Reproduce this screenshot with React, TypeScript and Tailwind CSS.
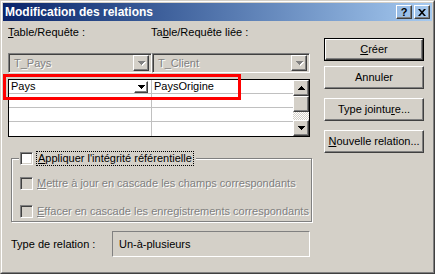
const raised =
  "border border-t-white border-l-white border-r-[#404040] border-b-[#404040] shadow-[inset_-1px_-1px_0_#808080]";
const sunken =
  "border border-t-[#808080] border-l-[#808080] border-r-white border-b-white shadow-[inset_1px_1px_0_#404040,inset_-1px_-1px_0_#d4d0c8]";
const disabledText = "text-[#808080] [text-shadow:1px_1px_0_#fff] whitespace-nowrap";

function DownTri({ grey = false }: { grey?: boolean }) {
  return (
    <svg width="7" height="4" viewBox="0 0 7 4" className={grey ? "drop-shadow-[1px_1px_0_#fff]" : ""}>
      <path d="M0 0h7v1h-1v1h-1v1h-1v1h-1v-1h-1v-1h-1v-1h-1z" fill={grey ? "#808080" : "#000"} />
    </svg>
  );
}

function UpTri() {
  return (
    <svg width="7" height="4" viewBox="0 0 7 4">
      <path d="M0 4h7v-1h-1v-1h-1v-1h-1v-1h-1v1h-1v1h-1v1h-1z" fill="#000" />
    </svg>
  );
}

function Combo({ text, w }: { text: string; w: string }) {
  return (
    <div className={`${sunken} ${w} h-[20px] flex items-center bg-[#d4d0c8] p-[2px]`}>
      <span className={`flex-1 pl-[3px] ${disabledText}`}>{text}</span>
      <div className={`${raised} w-[16px] h-[16px] flex items-center justify-center`}>
        <DownTri grey />
      </div>
    </div>
  );
}

function Checkbox({ disabled = false }: { disabled?: boolean }) {
  return (
    <div
      className={`w-[13px] h-[13px] shrink-0 border border-t-[#808080] border-l-[#808080] border-r-white border-b-white shadow-[inset_1px_1px_0_#404040,inset_-1px_-1px_0_#d4d0c8] ${
        disabled ? "bg-[#d4d0c8]" : "bg-white"
      }`}
    />
  );
}

function Button({ children, def = false }: { children: React.ReactNode; def?: boolean }) {
  if (def) {
    return (
      <div className="h-[23px] border border-black">
        <div className={`${raised} h-full flex items-center justify-center`}>{children}</div>
      </div>
    );
  }
  return <div className={`${raised} h-[23px] flex items-center justify-center`}>{children}</div>;
}

export default function App() {
  return (
    <div className="w-[435px] h-[274px] bg-[#d4d0c8] font-['Liberation_Sans',Arial,sans-serif] text-[11px] leading-[13px] text-black select-none">
      <div className="w-full h-full border border-t-[#d4d0c8] border-l-[#d4d0c8] border-r-[#404040] border-b-[#404040]">
        <div className="w-full h-full border border-t-white border-l-white border-r-[#808080] border-b-[#808080] p-[1px] relative">
          {/* title bar */}
          <div className="h-[18px] flex items-center bg-gradient-to-r from-[#0a246a] to-[#a6caf0] pl-[2px] pr-[2px]">
            <span className="flex-1 text-white font-bold text-[12px]">Modification des relations</span>
            <div className="flex">
              <div className={`${raised} w-[16px] h-[14px] flex items-center justify-center font-bold text-[11px] leading-none`}>
                ?
              </div>
              <div className={`${raised} w-[16px] h-[14px] ml-[2px] flex items-center justify-center`}>
                <svg width="8" height="7" viewBox="0 0 8 7">
                  <path d="M0 0h2l2 2.2 2-2.2h2l-3 3.5 3 3.5h-2l-2-2.2-2 2.2h-2l3-3.5z" fill="#000" />
                </svg>
              </div>
            </div>
          </div>

          {/* body */}
          <div className="flex pl-[5px]">
            <div className="w-[302px]">
              <div className="flex mt-[5px]">
                <span className="w-[143px]">
                  <u>T</u>able/Requête :
                </span>
                <span>
                  Ta<u>b</u>le/Requête liée :
                </span>
              </div>

              <div className="flex mt-[14px]">
                <Combo text="T_Pays" w="w-[144px]" />
                <Combo text="T_Client" w="w-[158px]" />
              </div>

              <div className="mt-[6px] h-[58px] border border-black bg-white flex">
                <div className="flex-1">
                  {[0, 1, 2, 3].map((i) => (
                    <div key={i} className={`h-[14px] flex ${i < 3 ? "border-b border-[#c0c0c0]" : ""}`}>
                      <div className="w-[143px] border-r border-[#c0c0c0] flex items-center pl-[2px] pr-[3px]">
                        {i === 0 && (
                          <>
                            <span className="flex-1">Pays</span>
                            <div className={`${raised} w-[14px] h-[12px] flex items-center justify-center`}>
                              <DownTri />
                            </div>
                          </>
                        )}
                      </div>
                      <div className="flex-1 flex items-center pl-[2px]">{i === 0 && "PaysOrigine"}</div>
                    </div>
                  ))}
                </div>
                <div className="w-[16px] flex flex-col">
                  <div className={`${raised} h-[16px] bg-[#d4d0c8] flex items-center justify-center`}>
                    <UpTri />
                  </div>
                  <div className={`${raised} h-[16px] bg-[#d4d0c8]`} />
                  <div className="flex-1 bg-[repeating-conic-gradient(#ffffff_0_25%,#d4d0c8_0_50%)] bg-[length:2px_2px]" />
                  <div className={`${raised} h-[16px] bg-[#d4d0c8] flex items-center justify-center`}>
                    <DownTri />
                  </div>
                </div>
              </div>

              <fieldset className="mt-[15px] ml-[3px] h-[70px] border border-[#808080] shadow-[1px_1px_0_#fff,inset_1px_1px_0_#fff] pl-[8px] pr-[2px]">
                <legend className="bg-[#d4d0c8] flex items-center ml-[-1px] pl-[1px] pr-[3px]">
                  <Checkbox />
                  <span className="ml-[4px] outline outline-1 outline-dotted outline-black px-[1px] whitespace-nowrap">
                    <u>A</u>ppliquer l'intégrité référentielle
                  </span>
                </legend>
                <div className="flex items-center mt-[12px]">
                  <Checkbox disabled />
                  <span className={`ml-[4px] ${disabledText}`}>
                    <u>M</u>ettre à jour en cascade les champs correspondants
                  </span>
                </div>
                <div className="flex items-center mt-[15px]">
                  <Checkbox disabled />
                  <span className={`ml-[4px] ${disabledText}`}>
                    <u>E</u>ffacer en cascade les enregistrements correspondants
                  </span>
                </div>
              </fieldset>

              <div className="flex items-center mt-[9px] pl-[3px]">
                <span className="w-[101px]">Type de relation :</span>
                <div className="flex-1 h-[26px] border border-t-[#808080] border-l-[#808080] border-r-white border-b-white flex items-center pl-[6px]">
                  Un-à-plusieurs
                </div>
              </div>
            </div>

            <div className="ml-[14px] w-[100px] mt-[17px] flex flex-col">
              <Button def>
                <span>
                  <u>C</u>réer
                </span>
              </Button>
              <div className="mt-[5px]">
                <Button>Annuler</Button>
              </div>
              <div className="mt-[9px]">
                <Button>
                  <span>
                    Type jointu<u>r</u>e...
                  </span>
                </Button>
              </div>
              <div className="mt-[9px]">
                <Button>
                  <span>
                    <u>N</u>ouvelle relation...
                  </span>
                </Button>
              </div>
            </div>
          </div>

          {/* red highlight annotation */}
          <div className="absolute left-[1px] top-[72px] w-[238px] h-[26px] border-[3px] border-[#ff0000] pointer-events-none" />
        </div>
      </div>
    </div>
  );
}
